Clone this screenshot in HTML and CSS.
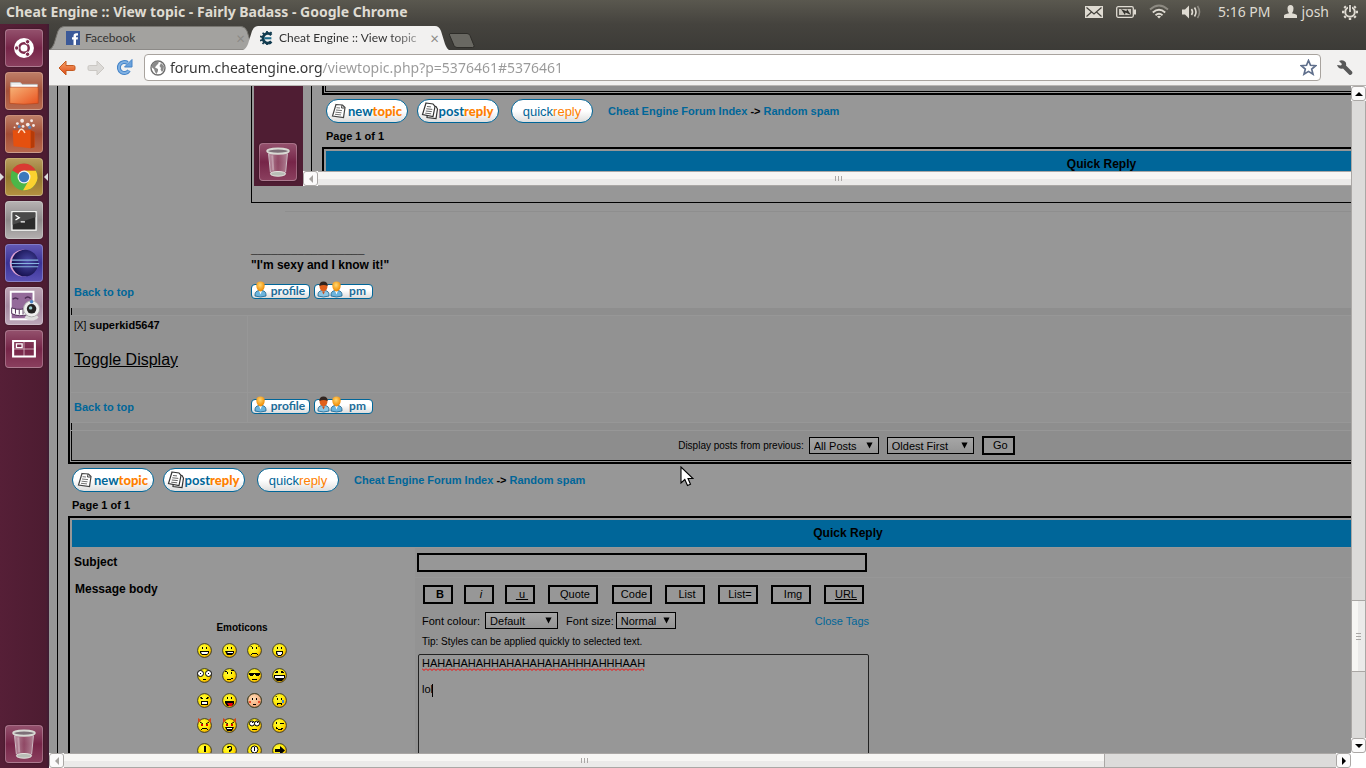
FILE: index.html
```
<!DOCTYPE html>
<html lang="en">
<head>
  <meta charset="UTF-8" />
  <meta name="viewport" content="width=device-width, initial-scale=1.0"/>
  <title>Cheat Engine :: View topic - Fairly Badass</title>
  <link rel="stylesheet" href="styles.css">
</head>
<body>
  <svg class="defs" aria-hidden="true">
    <defs>
      <radialGradient id="g-face" cx="40%" cy="35%" r="70%"><stop offset="0" stop-color="#ffff3c"/><stop offset=".6" stop-color="#ffe600"/><stop offset="1" stop-color="#f0a000"/></radialGradient>
      <radialGradient id="g-blush" cx="40%" cy="35%" r="70%"><stop offset="0" stop-color="#ffdcb4"/><stop offset="1" stop-color="#f0a070"/></radialGradient>
      <linearGradient id="g-orange" x1="0" y1="0" x2="0" y2="1"><stop offset="0" stop-color="#f6a56b"/><stop offset="1" stop-color="#dd4814"/></linearGradient>
      <linearGradient id="g-folder" x1="0" y1="0" x2="1" y2="1"><stop offset="0" stop-color="#f6b277"/><stop offset="1" stop-color="#e9521f"/></linearGradient>
      <linearGradient id="g-glass" x1="0" y1="0" x2="1" y2="0"><stop offset="0" stop-color="#d8c4cc" stop-opacity=".7"/><stop offset=".5" stop-color="#a86a80" stop-opacity=".5"/><stop offset="1" stop-color="#c8aab6" stop-opacity=".7"/></linearGradient>
      <radialGradient id="g-eclipse" cx="60%" cy="45%" r="60%"><stop offset="0" stop-color="#4b4ba8"/><stop offset="1" stop-color="#15104e"/></radialGradient>
      <radialGradient id="g-head" cx="45%" cy="35%" r="60%"><stop offset="0" stop-color="#ffd873"/><stop offset="1" stop-color="#f08a00"/></radialGradient>
    </defs>
    <symbol id="face" viewBox="0 0 15 15"><circle cx="7.5" cy="7.5" r="6.9" fill="url(#g-face)" stroke="#3c3c28" stroke-width="1"/></symbol>
    <symbol id="trash" viewBox="0 0 38 38">
      <path d="M9 7l2.500 24q8 4 15 0L29 7z" fill="url(#g-glass)"/>
      <ellipse cx="19" cy="31.500" rx="8" ry="2.500" fill="#b9bdb6" stroke="#e8e8e4"/>
      <ellipse cx="19" cy="7.500" rx="11.500" ry="2.800" fill="#7d7078" stroke="#d8dad4" stroke-width="2"/>
      <path d="M9 10l2 20M29 10l-2 20" stroke="#d3c4ca" fill="none"/>
      <path d="M13 12l1 16" stroke="#e8dce2" stroke-opacity=".4" stroke-width="2"/>
    </symbol>
    <symbol id="sheet" viewBox="0 0 18 18">
      <path d="M6 2.500l6.500.500L15 5.500l-1.500 10L2.500 14z" fill="#fff" stroke="#444" stroke-width="1.200"/>
      <path d="M12 3l-.5 3 3 0" fill="none" stroke="#444"/>
      <path d="M6.500 5.700l3.500.3M6 8l6 .6M5.500 10.200l6 .6M5 12.300l6 .6" stroke="#666" stroke-width=".9"/>
    </symbol>
    <symbol id="sheets" viewBox="0 0 18 18">
      <path d="M7 3.500l8 1L16.500 7l-1.500 9.500L6 15.500z" fill="#fff" stroke="#333" stroke-width="1.200"/>
      <path d="M5 1l7 1L14 4.500l-2 10L1.500 12.500z" fill="#fff" stroke="#333" stroke-width="1.200"/>
      <path d="M6 4.500l4 .4M5.300 6.800l6 .6M4.800 9l6 .6M4.200 11.200l6 .6" stroke="#555" stroke-width=".9"/>
    </symbol>
    <symbol id="person" viewBox="0 0 13 17">
      <path d="M1 15q-.5-5 4-5.500h3q4.500.5 4 5.500-5.500 2-11 0z" fill="#6cb4dc" stroke="#1c628c" stroke-width=".8"/>
      <path d="M5 9.500l1.500 4 1.500-4z" fill="#fff"/>
      <path d="M2.300 4.500Q2.300.5 6.500.5t4.200 4Q10.500 9.500 6.500 10.500 2.500 9.500 2.300 4.500z" fill="url(#g-head)"/>
    </symbol>
    <symbol id="person-dark" viewBox="0 0 13 17">
      <path d="M1 15q-.5-5 4-5.500h3q4.500.5 4 5.500-5.500 2-11 0z" fill="#8cc6e4" stroke="#1c628c" stroke-width=".8"/>
      <path d="M2.500 5q0-4 4-4t4 4q0 4.500-4 5.500-4-1-4-5.500z" fill="#e0601c"/>
      <path d="M2.300 5q0-4.500 4.200-4.500t4.200 4.500Q7 3 2.300 5z" fill="#302420"/>
      <path d="M5 10.500l1.500 3 1.500-3z" fill="#c8501c"/>
    </symbol>
    <symbol id="down" viewBox="0 0 8 8"><path d="M0.500 0.500h7l-3.500 7z" fill="#000"/></symbol>
  </svg>

  <header class="panel">
    <h1>Cheat Engine :: View topic - Fairly Badass - Google Chrome</h1>
    <div class="indicators">
      <svg width="18" height="12" viewBox="0 0 18 12"><path fill="#dfdbd2" d="M0 0h18v12H0z"/><path d="M1.500 1.500L9 8l7.500-6.500M1.500 10.500L6.500 6M16.500 10.500L11.500 6" fill="none" stroke="#45433d" stroke-width="1.200"/></svg>
      <svg width="20" height="12" viewBox="0 0 20 12"><rect x=".7" y=".7" width="16.600" height="10.600" rx="1.500" fill="none" stroke="#dfdbd2" stroke-width="1.300"/><path d="M18 3.500h2v5h-2z" fill="#dfdbd2"/><path d="M3 3h12v6H3z" fill="#c9c5bc"/><path d="M5 3l5.500 2.200L11 3l4 6-5.500-2.500L9 9z" fill="#33322d"/></svg>
      <svg width="20" height="15" viewBox="0 0 20 15"><g fill="none" stroke="#dfdbd2" stroke-width="1.800"><path d="M1 5.500q9-8 18 0" stroke="#8d8a82"/><path d="M3.800 8.500q6.200-5.500 12.400 0"/><path d="M6.500 11.300q3.500-3 7 0"/></g><path d="M8 12.500q2-1.500 4 0L10 14.500z" fill="#dfdbd2"/></svg>
      <svg width="20" height="14" viewBox="0 0 20 14"><path d="M0 4.500h3l4-4v13l-4-4H0z" fill="#dfdbd2"/><g fill="none" stroke-width="1.600" stroke="#dfdbd2"><path d="M9.500 4q2 3 0 6"/><path d="M12.500 2.500q3 4.500 0 9"/><path d="M15.500 1q4 6 0 12" stroke="#8d8a82"/></g></svg>
      <span class="clock">5:16 PM</span>
      <span class="user"><svg width="13" height="13" viewBox="0 0 13 13"><path d="M3.500 3.500Q3.500 0 6.500 0t3 3.500Q9.500 7 8 8.300q4.500.7 5 2.200V13H0v-2.500q.5-1.500 5-2.200Q3.500 7 3.500 3.500z" fill="#dfdbd2"/></svg>josh</span>
      <svg width="16" height="16" viewBox="0 0 16 16"><g stroke="#dfdbd2" fill="none"><circle cx="8" cy="8" r="4.800" stroke-width="2"/><path d="M8 0v2M8 14v2M0 8h2M14 8h2M2.300 2.300l1.500 1.500M12.200 12.200l1.500 1.500M2.300 13.700l1.500-1.500M12.200 3.800l1.500-1.500" stroke-width="2.400"/></g><path d="M6 0h4v8H6z" fill="#4a4943"/><path d="M7.100 1h1.800v7H7.100z" fill="#dfdbd2"/></svg>
    </div>
  </header>

  <div class="desktop">
    <nav class="launcher">
      <a href="#" class="app app-dash" aria-label="Dash home"><svg viewBox="0 0 38 38"><circle cx="19" cy="19" r="10.500" fill="#fff"/><circle cx="19" cy="19" r="5" fill="none" stroke="#7d2a4c" stroke-width="2.600"/><g fill="#7d2a4c" stroke="#fff"><circle cx="11.300" cy="19" r="2.300"/><circle cx="22.800" cy="12.400" r="2.300"/><circle cx="22.800" cy="25.600" r="2.300"/></g></svg></a>
      <a href="#" class="app app-files" aria-label="Home folder"><svg viewBox="0 0 38 38"><path d="M5 10h10l2 2h16v6H5z" fill="#eee" stroke="#bbb"/><path d="M6 13h27v4H6z" fill="#fff"/><path d="M4 15h30v17q-15 2-30 0z" fill="url(#g-folder)" stroke="#b8451a" stroke-width=".7"/></svg></a>
      <a href="#" class="app app-center" aria-label="Software center"><svg viewBox="0 0 38 38"><g fill="#fff" opacity=".85"><circle cx="12" cy="8" r="1.500"/><circle cx="17" cy="5" r="2"/><circle cx="23" cy="9" r="2"/><circle cx="27" cy="5" r="1.500"/><circle cx="9" cy="12" r="1"/><circle cx="29" cy="10" r="1.500"/><circle cx="18" cy="11" r="1.500"/></g><circle cx="14" cy="11" r="1.600" fill="#5a86c0"/><circle cx="25" cy="12" r="1.600" fill="#5a86c0"/><path d="M7 15h19l4 2v16l-4 1-18-2z" fill="#e5500f"/><path d="M26 15l4 2v16l-4 1z" fill="#b63b08"/><path d="M13 18q3-8 7 0" fill="none" stroke="#ffdcc0" stroke-width="1.500"/></svg></a>
      <a href="#" class="app app-chrome running" aria-label="Google Chrome"><svg viewBox="0 0 38 38"><circle cx="19" cy="19" r="14" fill="#4cb648"/><path d="M19 19L6.500 12.200A14 14 0 0 1 31.500 12.500H19z" fill="#d93a32"/><path d="M19 12.500h12.500A14 14 0 0 1 18 33l6.500-11z" fill="#fbd22f"/><circle cx="19" cy="19" r="6.800" fill="#f4f4f4"/><circle cx="19" cy="19" r="5.500" fill="#3b78bd"/></svg></a>
      <a href="#" class="app app-term" aria-label="Terminal"><svg viewBox="0 0 38 38"><path d="M5 9h28v22H5z" fill="#f4f4f2" stroke="#999"/><path d="M7 11h24v18H7z" fill="#2b2b2b"/><path d="M7 11h24v5L7 24z" fill="#4a4a4a"/><path d="M10 14l4 2.500-4 2.500M15.500 21H20" fill="none" stroke="#fff" stroke-width="1.400"/></svg></a>
      <a href="#" class="app app-eclipse" aria-label="Eclipse"><svg viewBox="0 0 38 38"><circle cx="18" cy="19" r="14" fill="#e0a4d4"/><circle cx="20" cy="19" r="14" fill="url(#g-eclipse)"/><path d="M6 16h28M5 19.500h30M6 23h28" stroke="#88b4e0" stroke-width="1.200"/></svg></a>
      <a href="#" class="app app-cheese" aria-label="Cheese"><svg viewBox="0 0 38 38"><path d="M5 4h24v29H5z" fill="#946a9a" stroke="#fff" stroke-width="2"/><path d="M7 12q3-3 6 0M20 11q3-3 6 0" stroke="#4c2c54" stroke-width="1.500" fill="none"/><path d="M6 21q10 4 20-2l-3 9q-9 3-17-1z" fill="#fff" stroke="#4c2c54"/><path d="M10 22v5M14 23v5M18 22v6" stroke="#4c2c54"/><ellipse cx="27" cy="31" rx="7" ry="3" fill="#ddd"/><circle cx="27" cy="22" r="8.500" fill="#eee" stroke="#aaa"/><circle cx="27" cy="22" r="5" fill="#222"/><circle cx="26" cy="21" r="1.800" fill="#9cc"/><circle cx="27" cy="14.500" r="1.800" fill="#4a84c4"/></svg></a>
      <a href="#" class="app app-dash" aria-label="Workspaces"><svg viewBox="0 0 38 38"><path d="M8 11h22v16H8zM19 11v16M8 19h22" fill="none" stroke="#cfa8b8"/><path d="M7.500 10.500h23v16.500h-23z" fill="none" stroke="#fff" stroke-width="2.200"/><path d="M11 13.500h6v4h-6z" fill="none" stroke="#fff" stroke-width="1.400"/></svg></a>
      <a href="#" class="app app-trash" aria-label="Trash"><svg><use href="#trash"/></svg></a>
    </nav>

    <div class="browser">
      <div class="tabs">
        <div class="tab">
          <svg class="tab-shape" viewBox="0 0 206 24" preserveAspectRatio="none"><path d="M0 24Q3 23 5 18L9 5Q11 0.500 15 .5H192Q196 .5 198 5l4 13q2 5 4 6z" fill="#a3a29f" stroke="#777570"/></svg>
          <svg class="fav" viewBox="0 0 14 14"><path d="M0 0h14v14H0z" fill="#3b5998"/><path d="M7.500 14V8.500H6V6.300h1.500V5q0-2.800 2.700-2.800H12v2.200h-1.100q-.9 0-.9.9v1h2L11.700 8.500H10V14z" fill="#fff"/></svg>
          <span class="tab-title">Facebook</span>
          <button class="close" aria-label="Close tab">×</button>
        </div>
        <div class="tab active">
          <svg class="tab-shape" viewBox="0 0 206 24" preserveAspectRatio="none"><path d="M0 24Q3 23 5 18L9 5Q11 0 15 0H192Q196 0 198 5l4 13q2 5 4 6z" fill="#f2f1f0"/></svg>
          <svg class="fav" viewBox="0 0 16 16"><path d="M13 4.500A5.500 5.500 0 1 0 13 12" fill="none" stroke="#123c50" stroke-width="3.200"/><path d="M5 8.300h8" stroke="#1c6c8c" stroke-width="2.400"/><path d="M8 0v3M3 2l2 2M0 6l3 1M0 11l3-1M3 15l2-3M8 16v-3M12 15l-1-3M13 1l-2 3" stroke="#123c50" stroke-width="2"/></svg>
          <span class="tab-title fade">Cheat Engine :: View topic</span>
          <button class="close" aria-label="Close tab">×</button>
        </div>
        <button class="new-tab" aria-label="New tab"><svg viewBox="0 0 26 15"><path d="M1 .5h17q2 0 3 2l4 10q.5 2-1.500 2H8q-2 0-3-2L.7 2.500Q0 .5 1 .5z" fill="#696862" stroke="#2e2d29"/></svg></button>
      </div>

      <div class="toolbar">
        <button class="tool" aria-label="Back"><svg width="18" height="16" viewBox="0 0 18 16"><path d="M8 1L1 8l7 7v-4.500h7.500q1.500 0 1.500-1.500V7q0-1.500-1.500-1.500H8z" fill="url(#g-orange)" stroke="#c45a20"/></svg></button>
        <button class="tool" aria-label="Forward"><svg width="18" height="16" viewBox="0 0 18 16"><path d="M10 1l7 7-7 7v-4.500H2.500Q1 10.500 1 9V7q0-1.500 1.500-1.500H10z" fill="#dcdad7" stroke="#cac7c3"/></svg></button>
        <button class="tool" aria-label="Reload"><svg width="17" height="17" viewBox="0 0 17 17"><path d="M13 11.500A5.500 5.500 0 1 1 11.500 4" fill="none" stroke="#4584c8" stroke-width="4"/><path d="M13 11.500A5.500 5.500 0 1 1 11.500 4" fill="none" stroke="#7fb0e2" stroke-width="2"/><path d="M16 .5v7.500H8.500z" fill="#6ba2dc" stroke="#4584c8"/></svg></button>
        <div class="omnibox">
          <svg width="16" height="16" viewBox="0 0 16 16"><circle cx="8" cy="8" r="7" fill="#fff" stroke="#6e6e6e" stroke-width="1.400"/><path d="M2 5q2-3.500 5-3.500l2 1-1.500 2L6 6 5 7.500l3 1.500v2L6.500 14 5 12 4 9 2 7.500zM11 3l3 3-.5 4L12 12l-1.500-2.500.5-1.500L9.500 6z" fill="#8a8a8a"/></svg>
          <input type="text" class="url" aria-label="Address" value="forum.cheatengine.org/viewtopic.php?p=5376461#5376461">
          <svg width="17" height="17" viewBox="0 0 17 17"><path d="M8.500 1.500l2 4.800 5.200.4-4 3.400 1.300 5.100-4.500-2.800L4 15.200l1.300-5.100-4-3.400 5.200-.4z" fill="#fff" stroke="#5f6f8c" stroke-width="1.700"/></svg>
        </div>
        <button class="tool wrench" aria-label="Settings"><svg width="17" height="16" viewBox="0 0 17 16"><path d="M1 5l4 .5L6 4 3 1q4-2 6.500 1 1 1.500.5 3.500l6 6q1 1.500-.3 2.800T13 14.500l-6-6Q2.500 9.500 1 5z" fill="#585858"/></svg></button>
      </div>

      <div class="viewport">
        <main class="page">
          <section class="forumline">
            <article class="post plain">
              <div class="body-left"></div>
              <div class="body">
                <div class="quote">
                  <div class="shot">
                    <div class="shot-dock"><span class="app app-trash"><svg><use href="#trash"/></svg></span></div>
                    <div class="shot-main">
                      <div class="shot-clip">
                        <div class="page">
                          <div class="forumline"><div class="cat cut"></div></div>
                          <div class="topic-nav">
                            <a href="#" class="pill"><svg><use href="#sheet"/></svg><span>new<b>topic</b></span></a>
                            <a href="#" class="pill"><svg><use href="#sheets"/></svg><span>post<b>reply</b></span></a>
                            <a href="#" class="pill quick"><span>quick<b>reply</b></span></a>
                            <span class="crumbs"><a href="#">Cheat Engine Forum Index</a> -&gt; <a href="#">Random spam</a></span>
                          </div>
                          <p class="pages">Page 1 of 1</p>
                          <div class="reply"><h2>Quick Reply</h2></div>
                        </div>
                      </div>
                      <div class="scroll-x shot-scroll"><span class="arrow dim left"></span><span class="thumb"><i class="grip"></i></span><span class="rest"></span></div>
                    </div>
                  </div>
                </div>
                <hr class="rule">
                <p class="signature">_________________<br>"I'm sexy and I know it!"</p>
              </div>
            </article>
            <div class="post foot plain">
              <div><a href="#" class="top">Back to top</a></div>
              <div class="badges">
                <a href="#" class="badge"><svg><use href="#person"/></svg><span>profile</span></a>
                <a href="#" class="badge"><svg><use href="#person-dark"/></svg><svg><use href="#person"/></svg><span>pm</span></a>
              </div>
            </div>
            <div class="spacer"></div>
            <article class="post hidden-post">
              <div class="author"><p><small>[X]</small> <b>superkid5647</b></p><a href="#" class="toggle">Toggle Display</a></div>
              <div></div>
            </article>
            <div class="post foot">
              <div><a href="#" class="top">Back to top</a></div>
              <div class="badges">
                <a href="#" class="badge"><svg><use href="#person"/></svg><span>profile</span></a>
                <a href="#" class="badge"><svg><use href="#person-dark"/></svg><svg><use href="#person"/></svg><span>pm</span></a>
              </div>
            </div>
            <div class="spacer"></div>
            <form class="cat filter">
              <label for="days">Display posts from previous:</label>
              <span class="pick pick-days"><select id="days"><option>All Posts</option></select><svg><use href="#down"/></svg></span>
              <span class="pick pick-order"><select aria-label="Order"><option>Oldest First</option></select><svg><use href="#down"/></svg></span>
              <button type="button" class="btn go">Go</button>
            </form>
          </section>

          <div class="topic-nav">
            <a href="#" class="pill"><svg><use href="#sheet"/></svg><span>new<b>topic</b></span></a>
            <a href="#" class="pill"><svg><use href="#sheets"/></svg><span>post<b>reply</b></span></a>
            <a href="#" class="pill quick"><span>quick<b>reply</b></span></a>
            <span class="crumbs"><a href="#">Cheat Engine Forum Index</a> -&gt; <a href="#">Random spam</a></span>
          </div>
          <p class="pages">Page 1 of 1</p>

          <form class="reply">
            <h2>Quick Reply</h2>
            <div class="cell label"><label for="subject">Subject</label></div>
            <div class="cell"><input type="text" id="subject" class="subject"></div>
            <div class="cell label tall">
              <label for="message">Message body</label>
              <div class="emoticons">
                <b>Emoticons</b>
                <div class="faces" id="faces"></div>
              </div>
            </div>
            <div class="cell editor">
              <div class="codes">
                <button type="button" class="btn s"><b>B</b></button>
                <button type="button" class="btn s"><i>i</i></button>
                <button type="button" class="btn s"><u>&nbsp;u&nbsp;</u></button>
                <button type="button" class="btn l">Quote</button>
                <button type="button" class="btn m">Code</button>
                <button type="button" class="btn m">List</button>
                <button type="button" class="btn m">List=</button>
                <button type="button" class="btn m">Img</button>
                <button type="button" class="btn m"><u>URL</u></button>
              </div>
              <div class="fonts">
                <label for="colour">Font colour:</label>
                <span class="pick pick-colour"><select id="colour"><option>Default</option></select><svg><use href="#down"/></svg></span>
                <label for="size" class="size-label">Font size:</label>
                <span class="pick pick-size"><select id="size"><option>Normal</option></select><svg><use href="#down"/></svg></span>
                <a href="#" class="close-tags">Close Tags</a>
              </div>
              <p class="tip">Tip: Styles can be applied quickly to selected text.</p>
              <div class="message">
                <textarea id="message" spellcheck="false">HAHAHAHAHHAHAHAHAHAHHHAHHHAAH

lol</textarea>
                <svg class="marks"><defs><pattern id="wave" width="4" height="3" patternUnits="userSpaceOnUse" y="0"><path d="M0 .5L2 2.500 4 .5" fill="none" stroke="#f00"/></pattern></defs><rect width="222" height="3" fill="url(#wave)" transform="translate(0 11)"/><path d="M10.500 27v13" stroke="#000"/></svg>
              </div>
            </div>
          </form>
        </main>
        <svg class="pointer" viewBox="0 0 14 21"><path d="M1 1v16l3.800-3.500L7.500 19.500l3-1.300L8 12.500h5z" fill="#fff" stroke="#000" stroke-width="1.100"/></svg>
      </div>

      <div class="scroll-y"><span class="arrow up"></span><span class="rest before"></span><span class="thumb"><i class="grip"></i></span><span class="rest after"></span><span class="arrow down"></span></div>
      <div class="scroll-x"><span class="arrow dim left"></span><span class="thumb"><i class="grip"></i></span><span class="rest"></span><span class="arrow right"></span></div>
    </div>
  </div>

  <script>
    // features drawn over the round face, on a 15x15 grid
    const eyes = '<path d="M5 4h1v2H5zM9 4h1v2H9z"/>';
    const evil = '<path d="M1 0l3 2-3 3zM14 0l-3 2 3 3z" fill="#d04818"/><path d="M3 4l3 2M12 4L9 6" stroke="#000"/><path d="M4 6h2v2H4zM9 6h2v2H9z" fill="#d00"/>';
    const faces = [
      eyes + '<path d="M3 8h9v2l-2 2H5L3 10z"/><path d="M4 9h7v1l-1 1H5z" fill="#fff"/>',
      eyes + '<path d="M3 8h9v2l-2 2H5z"/><path d="M5 9h6v1H6z" fill="#fff"/>',
      eyes + '<path d="M3 4h2V3M11 4V3h1M5 10h5v1h1v1h-1v-1H5v1H4v-1h1z"/>',
      eyes + '<path d="M4 8h7v3l-2 2H6l-2-2z"/><path d="M5 9h5v2H9v1H6z" fill="#fff"/>',
      '<circle cx="3.500" cy="5.500" r="3" fill="#fff" stroke="#000"/><circle cx="11.500" cy="5.500" r="3" fill="#fff" stroke="#000"/><path d="M3 5h1v1H3zM11 5h1v1h-1zM6 11h3v1H6z"/>',
      eyes + '<path d="M3 3h2v1H3zM9 2h3v1H9zM5 11h4v-1h2v1H9v1H5z"/>',
      '<path d="M2 5h11v2h-1v1H9V7H8V6H7v1H6v1H3V7H2zM5 11h5v1H5z"/>',
      '<path d="M3 4h1V3h2v2H3zM9 3h2v1h1v1H9zM2 7h11v3l-3 3H5l-3-3z"/><path d="M3 8h9v2H3z" fill="#fff"/>',
      '<path d="M3 4h2v1h1v1H4zM12 4h-2v1H9v1h2zM4 8h7v4H4z"/><path d="M5 9h5v2H5z" fill="#fff"/>',
      eyes + '<path d="M3 8h9v3l-2 2H5l-2-3z"/><path d="M5 10h6l-1 3H7z" fill="#e00"/>',
      '<circle cx="7.500" cy="7.500" r="6.900" fill="url(#g-blush)" stroke="#3c3c28"/><path d="M5 5h1v2H5zM9 5h1v2H9zM6 11h3v1H6z"/><path d="M2 8h2v2H2zM11 8h2v2h-2z" fill="#f05030"/>',
      '<path d="M3 4h2V3M5 5h1v2H5zM9 5h1v2H9zM5 10h5v2H9v-1H6v1H5z"/><path d="M10 7h2v3h-2z" fill="#48c"/>',
      evil + '<path d="M5 10h5v1h1v1h-1v-1H5v1H4v-1h1z"/>',
      evil + '<path d="M3 9h9l-2 4H5z"/><path d="M5 10h5v1H5z" fill="#fff"/>',
      '<circle cx="5" cy="5.500" r="2.500" fill="#fff" stroke="#000"/><circle cx="10" cy="5.500" r="2.500" fill="#fff" stroke="#000"/><path d="M5 4h1v1H5zM10 4h1v1h-1zM5 11h5v1H5z"/>',
      '<path d="M4 4h1v2H4zM8 5h4v1H8zM4 9h1v1h1v1h3v-1h2v1h-1v1H6v-1H4z"/>',
      '<path d="M7 3h2v6H7zM7 10h2v2H7z"/>',
      '<path d="M5 5V4l1-1h3l1 1v3L8 9H7V7l2-1V4H7v1zM7 10h2v2H7z"/>',
      '<circle cx="7.500" cy="6.500" r="3.500" fill="#fff" stroke="#000"/><path d="M7 4h1v4H7zM6 10h3v2H6z"/>',
      '<path d="M3 6h5V3l5 4.500L8 12V9H3z"/>'
    ];
    document.getElementById("faces").innerHTML = faces.map((f) =>
      `<a href="#" aria-label="emoticon"><svg width="15" height="15" viewBox="0 0 15 15"><use href="#face"/>${f}</svg></a>`
    ).join("");
  </script>
</body>
</html>
```
FILE: styles.css
```
* {
  box-sizing: border-box;
}

body {
  margin: 0;
  height: 100vh;
  display: flex;
  flex-direction: column;
  overflow: hidden;
  font-family: "Liberation Sans", Arial, sans-serif;
  font-size: 11px;
  color: #000;
  background: #3c3b37;
}

h1, h2, p {
  margin: 0;
}

a {
  color: #006699;
  text-decoration: none;
}

button {
  font: inherit;
  color: inherit;
}

.defs {
  position: absolute;
  width: 0;
  height: 0;
}

/* top panel */
.panel {
  height: 24px;
  flex: none;
  display: flex;
  justify-content: space-between;
  align-items: center;
  padding: 0 8px 1px 6px;
  background: linear-gradient(#5a584f, #45433e);
  color: #dfdbd2;
  font-family: "Noto Sans", "Open Sans", sans-serif;
  font-size: 14px;
}

.panel h1 {
  font-size: 14px;
  font-weight: bold;
}

.indicators {
  display: flex;
  align-items: center;
  gap: 13px;
}

.indicators .clock {
  margin-left: 3px;
}

.user {
  display: flex;
  align-items: center;
  gap: 5px;
}

.desktop {
  flex: 1;
  min-height: 0;
  display: flex;
}

/* launcher */
.launcher {
  width: 49px;
  flex: none;
  padding: 5px;
  display: flex;
  flex-direction: column;
  gap: 5px;
  background: linear-gradient(to right, #561f37, #4d1c31 46px, #3d1c33);
}

.app {
  width: 38px;
  height: 38px;
  flex: none;
  border-radius: 4px;
  border: 1px solid rgba(255, 255, 255, 0.25);
  box-shadow: 0 0 2px rgba(0, 0, 0, 0.4);
  display: block;
}

.app svg {
  display: block;
  width: 36px;
  height: 36px;
}

.app-dash { background: linear-gradient(#93506c, #762548 50%, #8a3f5e); }
.app-files { background: linear-gradient(#bd7d66, #a4513a 50%, #b8684c); }
.app-center { background: linear-gradient(#bd7d66, #a34c34 50%, #b8684c); }
.app-chrome { background: linear-gradient(#b89c5c, #92762e 50%, #b49140); }
.app-term { background: linear-gradient(#b5b1b1, #8e898a 50%, #b2aeae); }
.app-eclipse { background: linear-gradient(#6258b4, #3a3296 50%, #5850b4); }
.app-cheese { background: linear-gradient(#bca4b4, #a488a0 50%, #bca6b8); }
.app-trash { background: linear-gradient(#93506c, #762548 50%, #8a3f5e); }

.launcher .app-trash {
  margin-top: auto;
}

.running {
  position: relative;
}

.running::before,
.running::after {
  content: "";
  position: absolute;
  top: 14px;
  border: 4px solid transparent;
}

.running::before {
  left: -6px;
  border-left-color: #ddd;
  border-right-width: 0;
}

.running::after {
  right: -6px;
  border-right-color: #ddd;
  border-left-width: 0;
}

/* browser frame */
.browser {
  flex: 1;
  min-width: 0;
  display: grid;
  grid-template-columns: minmax(0, 1fr) 15px;
  grid-template-rows: 26px 36px minmax(0, 1fr) 15px;
  background: #fff;
}

.tabs,
.toolbar {
  grid-column: 1 / 3;
}

.tabs {
  display: flex;
  align-items: flex-end;
  background: linear-gradient(#45433e, #3c3b37);
  font-family: "Lato", "Open Sans", sans-serif;
  font-size: 12px;
  color: #333;
}

.tab {
  position: relative;
  width: 206px;
  height: 24px;
  padding: 0 10px 1px 17px;
  display: flex;
  align-items: center;
  gap: 5px;
}

.tab.active {
  margin-left: -12px;
}

.tab > * {
  position: relative;
}

.tab .tab-shape {
  position: absolute;
  left: 0;
  top: 0;
  width: 100%;
  height: 100%;
}

.fav {
  width: 14px;
  height: 14px;
  flex: none;
}

.tab-title {
  flex: 1;
  white-space: nowrap;
  overflow: hidden;
}

.fade {
  mask-image: linear-gradient(to right, #000 75%, transparent 110%);
}

.close {
  border: 0;
  padding: 0;
  background: none;
  color: #8b8985;
  font-size: 15px;
}

.new-tab {
  border: 0;
  padding: 0;
  background: none;
  height: 20px;
}

.new-tab svg {
  display: block;
  width: 26px;
  height: 15px;
}

.toolbar {
  display: flex;
  align-items: center;
  gap: 11px;
  padding: 0 13px 0 9px;
  background: #f2f1f0;
  border-bottom: 1px solid #b9b6b3;
}

.tool {
  border: 0;
  padding: 0;
  background: none;
  display: flex;
}

.wrench {
  margin-left: 4px;
}

.omnibox {
  flex: 1;
  height: 27px;
  display: flex;
  align-items: center;
  padding: 0 3px 0 5px;
  gap: 4px;
  background: #fff;
  border: 1px solid #a8a39e;
  border-radius: 4px;
}

.url {
  flex: 1;
  border: 0;
  padding: 0;
  outline: 0;
  font-family: "Noto Sans", "Open Sans", sans-serif;
  font-size: 14px;
  color: transparent;
  background: linear-gradient(to right, #333 152px, #999 152px);
  background-clip: text;
}

/* forum page */
.viewport {
  position: relative;
  overflow: hidden;
  background: #979797;
}

.page {
  margin: 0 8px;
  padding: 0 10px;
  border: solid #000;
  border-width: 0 1px;
}

.viewport > .page {
  width: 121.5%;
}

.forumline {
  border: 2px solid #000;
  border-top: 0;
  padding: 0 1px 1px;
  display: grid;
  gap: 1px;
}

.post {
  display: grid;
  grid-template-columns: 176px minmax(0, 1fr);
  gap: 1px;
}

.post > * {
  padding: 0 3px;
  background: #929292;
}

.plain > * {
  background: #979797;
}

.body {
  height: 191px;
}

.quote {
  border: 1px solid #000;
  border-top: 0;
  padding: 0 2px 16px;
}

.shot {
  display: flex;
  height: 100px;
  overflow: hidden;
}

.shot-dock {
  width: 49px;
  flex: none;
  padding: 5px;
  display: flex;
  align-items: flex-end;
  background: #4f1d33;
}

.shot-main {
  width: 117%;
  flex: none;
}

.shot-clip {
  height: 85px;
  overflow: hidden;
}

.rule {
  margin: 8px 0 0 34px;
  border: 0;
  height: 1px;
  background: #8e8e8e;
}

.signature {
  margin-top: 29px;
  font-size: 12px;
  line-height: 16px;
  font-weight: bold;
}

.foot > * {
  height: 29px;
  display: flex;
  align-items: center;
  padding-bottom: 2px;
}

.top {
  font-weight: bold;
}

.badges {
  gap: 4px;
}

.badge {
  width: 59px;
  height: 15px;
  display: flex;
  align-items: flex-end;
  border: 1px solid #006699;
  border-radius: 4px;
  background: linear-gradient(#fff 40%, #dcdcdc);
  color: #1c6c98;
  font-family: "Lato", sans-serif;
  font-size: 12px;
  font-weight: bold;
  line-height: 14px;
}

.badge svg {
  width: 13px;
  height: 17px;
  flex: none;
}

.badge svg:first-child {
  margin-left: 2px;
}

.badge span {
  flex: 1;
  text-align: center;
}

.spacer {
  height: 7px;
  border-left: 1px solid #000;
  background: #8e8e8e;
}

.hidden-post {
  height: 76px;
}

.author {
  line-height: 18px;
}

.author small {
  font-size: 10px;
}

.toggle {
  display: block;
  margin-top: 16px;
  font-size: 16px;
  color: #000;
  text-decoration: underline;
}

.cat {
  border: solid #000;
  border-width: 0 1px 1px;
  background: #8d8d8d;
}

.cut {
  height: 6px;
}

.filter {
  height: 30px;
  display: flex;
  justify-content: center;
  align-items: center;
  gap: 8px;
  padding-right: 3px;
  font-size: 10px;
}

.filter label {
  margin-right: -3px;
}

/* selects and buttons */
.pick {
  display: inline-grid;
  align-items: center;
}

.pick select,
.pick svg {
  grid-area: 1 / 1;
}

.pick select {
  appearance: none;
  height: 17px;
  padding: 0 4px;
  border: 1px solid #000;
  border-radius: 0;
  background: linear-gradient(#a6a6a6, #949494);
  font: 11px "Liberation Sans", Arial, sans-serif;
  color: #000;
}

.pick svg {
  justify-self: end;
  width: 7px;
  height: 7px;
  margin-right: 6px;
  pointer-events: none;
}

.pick-days { width: 70px; }
.pick-order { width: 87px; }
.pick-colour { width: 73px; }
.pick-size { width: 60px; }

.btn {
  height: 19px;
  padding: 0 0 0 4px;
  border: 2px solid #000;
  background: #979797;
  font-size: 11px;
  line-height: 13px;
}

.go { width: 33px; }
.btn.s { width: 30px; }
.btn.m { width: 40px; }
.btn.l { width: 50px; }

/* topic navigation */
.topic-nav {
  display: flex;
  align-items: center;
  gap: 9px;
  padding: 4px 4px 0;
}

.pill {
  width: 82px;
  height: 24px;
  display: flex;
  align-items: center;
  justify-content: center;
  padding-right: 2px;
  border: 1px solid #006699;
  border-radius: 12px;
  background: linear-gradient(#fff 50%, #dedede);
  color: #006699;
  font-family: "Lato", sans-serif;
  font-size: 13px;
  font-weight: bold;
}

.pill b {
  color: #ff8000;
}

.pill svg {
  width: 18px;
  height: 18px;
}

.quick {
  margin-left: 3px;
  padding-right: 0;
  font-family: "Liberation Sans", Arial, sans-serif;
  font-weight: normal;
}

.quick b {
  font-weight: normal;
}

.crumbs {
  margin-left: 6px;
  font-weight: bold;
}

.pages {
  padding: 6px 4px 3px;
  font-weight: bold;
  line-height: 15px;
}

/* quick reply */
.reply {
  border: 2px solid #000;
  padding: 2px;
  display: grid;
  grid-template-columns: 342px minmax(0, 1fr);
  gap: 1px;
}

.reply h2 {
  grid-column: 1 / 3;
  height: 27px;
  line-height: 27px;
  text-align: center;
  font-size: 12px;
  background: #006699;
}

.cell {
  padding: 5px 2px;
  background: #939393;
}

.label {
  background: #979797;
  font-size: 12px;
  font-weight: bold;
  line-height: 18px;
}

.tall {
  padding: 2px 5px 2px 3px;
}

.subject {
  display: block;
  width: 450px;
  height: 19px;
  border: 2px solid #000;
  background: #979797;
}

.emoticons {
  margin-top: 22px;
  text-align: center;
  font-size: 10px;
  line-height: 15px;
}

.faces {
  display: grid;
  grid-template-columns: repeat(4, 15px);
  justify-content: center;
  gap: 10px;
  margin-top: 8px;
}

.faces svg {
  display: block;
}

.editor {
  height: 320px;
  padding: 7px 3px;
}

.codes {
  display: flex;
  gap: 13px;
  padding-left: 5px;
}

.codes .s {
  margin-right: -2px;
}

.codes .l {
  margin: 0 1px 0 2px;
}

.fonts {
  width: 451px;
  display: flex;
  align-items: center;
  margin-top: 8px;
  padding-left: 4px;
}

.pick-colour {
  margin-left: 5px;
}

.size-label {
  margin-left: 8px;
}

.pick-size {
  margin-left: 2px;
}

.close-tags {
  margin-left: auto;
}

.tip {
  padding-left: 4px;
  margin: 5px 0;
  font-size: 10px;
  line-height: 15px;
}

.message {
  display: grid;
  width: 451px;
}

.message > * {
  grid-area: 1 / 1;
}

.message textarea {
  height: 200px;
  padding: 2px 3px;
  border: 1px solid #222;
  border-radius: 2px;
  outline: 0;
  resize: none;
  background: #979797;
  font: 11px/13px "Liberation Sans", Arial, sans-serif;
  color: #000;
}

.marks {
  width: 230px;
  height: 60px;
  margin: 3px 4px;
  pointer-events: none;
}

.pointer {
  position: absolute;
  left: 631px;
  top: 380px;
  width: 14px;
  height: 21px;
}

/* scrollbars */
.scroll-x,
.scroll-y {
  display: flex;
  background: #fff;
}

.scroll-x {
  height: 15px;
}

.scroll-y {
  flex-direction: column;
}

.arrow {
  width: 15px;
  height: 15px;
  flex: none;
  display: flex;
  align-items: center;
  justify-content: center;
  border: 1px solid #aaa7a5;
  border-radius: 3px;
  background: #fbfafa;
}

.arrow::before {
  content: "";
  border: 4px solid transparent;
}

.arrow.left::before { border-right-color: #000; border-left-width: 0; }
.arrow.right::before { border-left-color: #000; border-right-width: 0; }
.arrow.up::before { border-bottom-color: #000; border-top-width: 0; }
.arrow.down::before { border-top-color: #000; border-bottom-width: 0; }
.arrow.dim::before { border-right-color: #a5a29f; }

.thumb {
  display: flex;
  align-items: center;
  justify-content: center;
  border: 1px solid #aaa7a5;
}

.rest {
  border: 1px solid #aaa7a5;
  background: #dcdbda;
}

.scroll-x .thumb { flex: 1042 0 0; border-left: 0; background: linear-gradient(#f7f6f4 50%, #ebeae9 50%); }
.scroll-x .rest { flex: 231 0 0; border-left: 0; border-right: 0; }
.shot-scroll .rest { flex-grow: 540; }
.scroll-y .thumb { flex: 71 0 0; background: linear-gradient(to right, #f7f6f4 50%, #ebeae9 50%); }
.scroll-y .before { flex: 502 0 0; border-top: 0; border-bottom: 0; }
.scroll-y .after { flex: 66 0 0; border-top: 0; border-bottom: 0; }

.grip {
  width: 7px;
  height: 5px;
  background: repeating-linear-gradient(to right, #aaa7a5 0 1px, transparent 1px 3px);
}

.scroll-y .grip {
  width: 5px;
  height: 7px;
  background: repeating-linear-gradient(#aaa7a5 0 1px, transparent 1px 3px);
}
```
